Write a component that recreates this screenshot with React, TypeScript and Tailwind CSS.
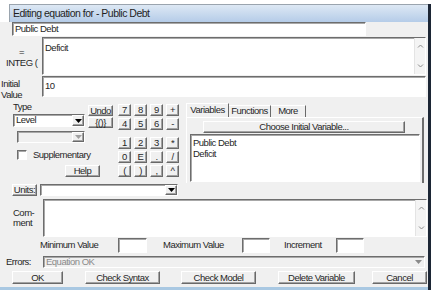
import React from "react";

const raised =
  "bg-[#f0f0f0] border border-t-white border-l-white border-r-[#696969] border-b-[#696969] shadow-[inset_-1px_-1px_0_#a3a3a3]";
const sunken =
  "bg-white border border-t-[#6d6d6d] border-l-[#6d6d6d] border-r-white border-b-white shadow-[inset_1px_1px_0_#a8a8a8]";

function Arrow({ color = "#000" }: { color?: string }) {
  return (
    <svg width="7" height="4" viewBox="0 0 7 4">
      <path d="M0 0h7L3.5 4z" fill={color} />
    </svg>
  );
}

function Chevron({ up }: { up?: boolean }) {
  return (
    <svg width="7" height="4" viewBox="0 0 7 4">
      <path d={up ? "M1 3.5L3.5 1 6 3.5" : "M1 0.5L3.5 3 6 0.5"} stroke="#8c8c8c" fill="none" />
    </svg>
  );
}

function ScrollBar() {
  return (
    <div className="w-[11px] h-full bg-[#f4f4f4] border-l border-[#e4e4e4] flex flex-col items-center justify-between py-[6px]">
      <Chevron up />
      <Chevron />
    </div>
  );
}

function Btn({ className = "", children }: { className?: string; children?: React.ReactNode }) {
  return <div className={`${raised} flex items-center justify-center leading-none ${className}`}>{children}</div>;
}

const keys = [
  ["7", "8", "9", "+"],
  ["4", "5", "6", "-"],
  ["1", "2", "3", "*"],
  ["0", "E", ".", "/"],
  ["(", ")", ",", "^"],
];
const rowTop = ["mt-[4px]", "mt-[2px]", "mt-[7px]", "mt-[2px]", "mt-[2px]"];

export default function App() {
  return (
    <div className="w-[441px] h-[296px] bg-white overflow-hidden font-['Liberation_Sans',Arial,sans-serif] text-[9.5px] tracking-[-0.5px] text-[#262626]">
      <div className="mt-[4px] w-[431px] border-r-[3px] border-[#1c2635]">
        {/* title bar */}
        <div className="ml-[9px] h-[18px] border-t border-l border-[#9aa4ae] bg-gradient-to-b from-[#dde8f4] to-[#b5cce8] flex items-center pl-[3px] text-[10.5px] tracking-[-0.5px] text-[#1f1f1f]">
          Editing equation for - Public Debt
        </div>

        <div className="h-[265px] bg-[#f0f0f0] flex flex-col">
          {/* name */}
          <div className="h-[14px] flex">
            <div className={`${sunken} ml-[12px] w-[354px] h-full flex items-center pl-[2px]`}>Public Debt</div>
          </div>

          {/* equation */}
          <div className="mt-[1px] h-[38px] flex">
            <div className="w-[42px] overflow-hidden whitespace-nowrap flex flex-col pt-[10px] pl-[6px]">
              <span className="pl-[13px] leading-[10px]">=</span>
              <span className="leading-[12px]">INTEG (</span>
            </div>
            <div className={`${sunken} w-[384px] h-full flex`}>
              <div className="flex-1 pl-[2px] pt-[3px]">Deficit</div>
              <ScrollBar />
            </div>
          </div>

          {/* initial value */}
          <div className="mt-[1px] h-[21px] flex">
            <div className="w-[42px] pl-[1px] pt-[2px] flex flex-col leading-[11px]">
              <span>Initial</span>
              <span>Value</span>
            </div>
            <div className={`${sunken} w-[384px] h-full pl-[2px] pt-[2px]`}>10</div>
          </div>

          {/* middle */}
          <div className="mt-[3px] h-[83px] flex">
            <div className="w-[113px] flex flex-col">
              <div className="h-[43px] flex">
                <div className="w-[87px] pl-[13px] flex flex-col">
                  <span className="mt-[2px] leading-[9px]">Type</span>
                  <div className={`${sunken} mt-[3px] h-[13px] w-[72px] flex items-center`}>
                    <span className="flex-1 pl-[2px]">Level</span>
                    <Btn className="w-[12px] h-full">
                      <Arrow />
                    </Btn>
                  </div>
                  <div className={`${sunken} !bg-[#f0f0f0] mt-[4px] ml-[4px] h-[12px] w-[68px] flex justify-end`}>
                    <Btn className="w-[12px] h-full">
                      <Arrow color="#a0a0a0" />
                    </Btn>
                  </div>
                </div>
                <div className="ml-[1px] w-[25px] flex flex-col">
                  <Btn className="mt-[5px] h-[11px]">Undo</Btn>
                  <Btn className="mt-[1px] h-[11px]">{"{()}"}</Btn>
                </div>
              </div>
              <div className="mt-[7px] h-[10px] flex items-center pl-[17px]">
                <div className={`${sunken} w-[10px] h-[10px]`} />
                <span className="ml-[6px]">Supplementary</span>
              </div>
              <Btn className="mt-[5px] ml-[65px] w-[35px] h-[12px]">Help</Btn>
            </div>

            {/* keypad */}
            <div className="ml-[5px] flex flex-col">
              {keys.map((row, i) => (
                <div key={i} className={`${rowTop[i]} flex gap-[3px]`}>
                  {row.map((k) => (
                    <Btn key={k} className="w-[13px] h-[12px]">
                      {k}
                    </Btn>
                  ))}
                </div>
              ))}
            </div>

            {/* tabs */}
            <div className="ml-[7px] w-[238px] flex flex-col">
              <div className="mt-[3px] h-[14px] flex items-end">
                <div className="h-[14px] w-[43px] bg-[#f0f0f0] border-t border-l border-white border-r border-r-[#696969] flex items-center justify-center">
                  Variables
                </div>
                <div className="h-[12px] w-[42px] border-t border-white border-r border-r-[#696969] flex items-center justify-center">
                  Functions
                </div>
                <div className="h-[12px] w-[35px] border-t border-white border-r border-r-[#696969] flex items-center justify-center">
                  More
                </div>
              </div>
              <div className="h-[66px] border-t border-l border-white border-r-2 border-r-[#6d6d6d] flex flex-col">
                <Btn className="mt-[3px] ml-[16px] w-[202px] h-[12px]">Choose Initial Variable...</Btn>
                <div className={`${sunken} mt-[1px] ml-[3px] w-[230px] h-[48px] pl-[2px] pt-[2px] flex flex-col leading-[11px]`}>
                  <span>Public Debt</span>
                  <span>Deficit</span>
                </div>
              </div>
            </div>
          </div>

          {/* units */}
          <div className="mt-[1px] h-[12px] flex">
            <Btn className="ml-[12px] w-[25px] h-full">Units:</Btn>
            <div className={`${sunken} ml-[3px] w-[138px] h-full flex justify-end`}>
              <Btn className="w-[12px] h-full">
                <Arrow />
              </Btn>
            </div>
          </div>

          {/* comment */}
          <div className="mt-[3px] h-[38px] flex">
            <div className="w-[43px] pl-[13px] pt-[9px] flex flex-col leading-[10px]">
              <span>Com-</span>
              <span>ment</span>
            </div>
            <div className={`${sunken} w-[384px] h-full flex`}>
              <div className="flex-1" />
              <ScrollBar />
            </div>
          </div>

          {/* min / max / increment */}
          <div className="mt-[1px] h-[15px] flex items-center">
            <span className="ml-[40px] w-[78px]">Minimum Value</span>
            <div className={`${sunken} w-[29px] h-full`} />
            <span className="pl-[16px] w-[95px]">Maximum Value</span>
            <div className={`${sunken} w-[28px] h-full`} />
            <span className="pl-[14px] w-[66px]">Increment</span>
            <div className={`${sunken} w-[28px] h-full`} />
          </div>

          {/* errors */}
          <div className="mt-[3px] h-[12px] flex items-center">
            <span className="w-[43px] pl-[6px]">Errors:</span>
            <div className={`${sunken} !bg-[#f0f0f0] w-[382px] h-full flex items-center`}>
              <span className="flex-1 pl-[2px] text-[#8a8a8a]">Equation OK</span>
              <div className="w-[11px] h-full flex items-center justify-center">
                <Arrow color="#8a8a8a" />
              </div>
            </div>
          </div>

          {/* buttons */}
          <div className="mt-[3px] h-[13px] flex">
            <Btn className="ml-[12px] w-[51px] h-full">OK</Btn>
            <Btn className="ml-[22px] w-[75px] h-full">Check Syntax</Btn>
            <Btn className="ml-[21px] w-[75px] h-full">Check Model</Btn>
            <Btn className="ml-[22px] w-[77px] h-full">Delete Variable</Btn>
            <Btn className="ml-[17px] w-[55px] h-full">Cancel</Btn>
          </div>
        </div>
        <div className="h-[3px] bg-[#a9c8e2]" />
      </div>
    </div>
  );
}
